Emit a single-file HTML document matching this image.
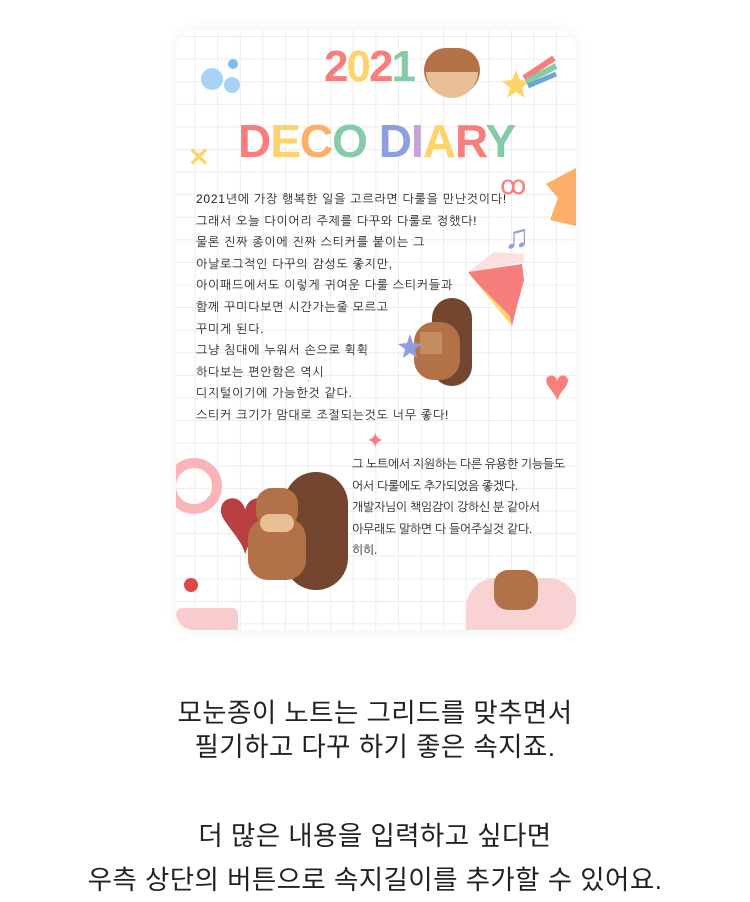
<!DOCTYPE html>
<html><head><meta charset="utf-8"><style>
body{margin:0;width:750px;height:900px;background:#fff;position:relative;overflow:hidden;font-family:"Liberation Sans","Noto Sans CJK KR",sans-serif}
.card{position:absolute;left:176px;top:30px;width:400px;height:600px;border-radius:18px;overflow:hidden;
background-color:#fff;background-image:linear-gradient(#ececec 1px,transparent 1px),linear-gradient(90deg,#ececec 1px,transparent 1px);background-size:22.6px 22.6px;background-position:-4px 6px;box-shadow:0 0 14px rgba(0,0,0,.07)}
.a{position:absolute}
.t{position:absolute;font-size:12px;letter-spacing:0.75px;color:#222;line-height:21.6px;white-space:nowrap;font-family:"Liberation Sans","NanumGothic",sans-serif}
.cap{position:absolute;left:0;width:750px;text-align:center;font-size:26.5px;letter-spacing:0.4px;color:#222;line-height:34px;font-family:"Liberation Sans","Noto Sans CJK KR",sans-serif}
.big{position:absolute;font-weight:bold;font-family:"Liberation Sans",sans-serif}
</style></head><body>
<div class="card">
 <div class="a" style="left:25px;top:38px;width:22px;height:22px;border-radius:50%;background:#a9d3f6"></div>
 <div class="a" style="left:48px;top:47px;width:16px;height:16px;border-radius:50%;background:#a9d3f6"></div>
 <div class="a" style="left:52px;top:29px;width:10px;height:10px;border-radius:50%;background:#7cc0f2"></div>
 <div class="big" style="left:148px;top:12px;font-size:44px;letter-spacing:-2px"><span style="color:#f77e7c">2</span><span style="color:#fdd46b">0</span><span style="color:#f77e7c">2</span><span style="color:#84cba7">1</span></div>
 <div class="a" style="left:248px;top:18px;width:56px;height:48px;border-radius:22px 22px 26px 26px;background:#b37148"></div>
 <div class="a" style="left:250px;top:42px;width:52px;height:26px;border-radius:0 0 26px 26px;background:#e9c095"></div>
 <svg class="a" style="left:322px;top:18px" width="60" height="50"><polygon points="18,22 22,32 32,33 24,40 27,50 18,44 9,50 12,40 4,33 14,32" fill="#fdd46b"/><path d="M26 30 L56 10" stroke="#f77e7c" stroke-width="6"/><path d="M28 34 L58 18" stroke="#84cba7" stroke-width="6"/><path d="M30 38 L58 26" stroke="#6fa5d4" stroke-width="5"/></svg>
 <div class="big" style="left:62px;top:84px;font-size:46px;letter-spacing:-1px"><span style="color:#f77e7c">D</span><span style="color:#fdd46b">E</span><span style="color:#fdaf6a">C</span><span style="color:#84cba7">O</span> <span style="color:#8f9ee0">D</span><span style="color:#c6a2da">I</span><span style="color:#fdd46b">A</span><span style="color:#f77e7c">R</span><span style="color:#84cba7">Y</span></div>
 <div class="a" style="left:12px;top:112px;font-size:26px;color:#fdd46b;font-weight:bold">✕</div>
 <div class="a" style="left:324px;top:140px;font-size:26px;color:#f77e7c">ꝏ</div>
 <svg class="a" style="left:370px;top:138px" width="30" height="60"><polygon points="30,0 30,58 4,52 12,30 0,16" fill="#fdaf6a"/></svg>
 <div class="a" style="left:328px;top:188px;font-size:34px;color:#8f9ee0">♫</div>
 <svg class="a" style="left:288px;top:220px" width="70" height="80"><polygon points="4,22 58,14 60,30 52,60 48,76" fill="#f77e7c"/><polygon points="4,22 48,76 46,66 8,28" fill="#fdd46b"/><polygon points="4,22 60,12 60,4 30,2" fill="#fde0df"/></svg>
 <div class="a" style="left:256px;top:268px;width:40px;height:88px;border-radius:22px;background:#74452f"></div>
 <div class="a" style="left:238px;top:292px;width:46px;height:58px;border-radius:20px;background:#b37148"></div>
 <div class="a" style="left:244px;top:302px;width:22px;height:22px;background:#c58d5e"></div>
 <svg class="a" style="left:222px;top:304px" width="24" height="24"><polygon points="12,0 15,9 24,10 17,15 19,24 12,19 5,24 7,15 0,10 9,9" fill="#8f9ee0"/></svg>
 <div class="a" style="left:368px;top:334px;font-size:44px;color:#f77e7c;line-height:1">♥</div>
 <div class="a" style="left:190px;top:398px;font-size:22px;color:#f77e7c">✦</div>
 <div class="a" style="left:-10px;top:428px;border-radius:50%;border:10px solid #f9b5b8;box-sizing:border-box;width:56px;height:56px"></div>
 <div class="a" style="left:40px;top:440px;font-size:98px;color:#b84040;line-height:1">♥</div>
 <div class="a" style="left:108px;top:442px;width:64px;height:118px;border-radius:34px;background:#74452f"></div>
 <div class="a" style="left:72px;top:488px;width:58px;height:62px;border-radius:20px;background:#b37148"></div>
 <div class="a" style="left:80px;top:458px;width:42px;height:40px;border-radius:16px;background:#b37148"></div>
 <div class="a" style="left:84px;top:484px;width:34px;height:18px;border-radius:10px;background:#e9c095"></div>
 <div class="a" style="left:0px;top:578px;width:62px;height:30px;background:#f8cccc;border-radius:6px"></div>
 <div class="a" style="left:8px;top:548px;width:14px;height:14px;border-radius:50%;background:#e04848"></div>
 <div class="a" style="left:290px;top:548px;width:112px;height:60px;border-radius:30px 30px 0 0;background:#f9d3d3"></div>
 <div class="a" style="left:318px;top:540px;width:44px;height:40px;border-radius:14px;background:#b37148"></div>
 <div class="t" style="left:20px;top:159px">2021년에 가장 행복한 일을 고르라면 다룰을 만난것이다!<br>그래서 오늘 다이어리 주제를 다꾸와 다룰로 정했다!<br>물론 진짜 종이에 진짜 스티커를 붙이는 그<br>아날로그적인 다꾸의 감성도 좋지만,<br>아이패드에서도 이렇게 귀여운 다룰 스티커들과<br>함께 꾸미다보면 시간가는줄 모르고<br>꾸미게 된다.<br>그냥 침대에 누워서 손으로 휙휙<br>하다보는 편안함은 역시<br>디지털이기에 가능한것 같다.<br>스티커 크기가 맘대로 조절되는것도 너무 좋다!</div>
 <div class="t" style="left:176px;top:424px;letter-spacing:-0.3px">그 노트에서 지원하는 다른 유용한 기능들도<br>어서 다룰에도 추가되었음 좋겠다.<br>개발자님이 책임감이 강하신 분 같아서<br>아무래도 말하면 다 들어주실것 같다.<br>히히.</div>
</div>
<div class="cap" style="top:696px">모눈종이 노트는 그리드를 맞추면서<br>필기하고 다꾸 하기 좋은 속지죠.</div>
<div class="cap" style="top:814px;line-height:44px">더 많은 내용을 입력하고 싶다면<br>우측 상단의 버튼으로 속지길이를 추가할 수 있어요.</div>
</body></html>
